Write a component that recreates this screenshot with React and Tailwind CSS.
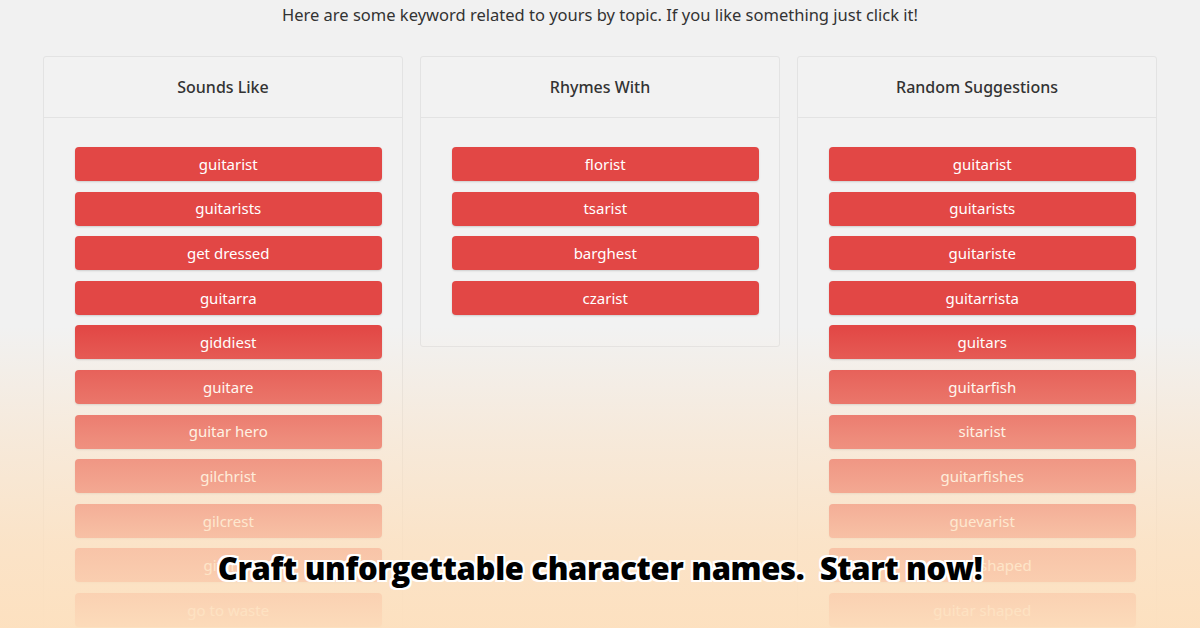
import React from "react";

const sounds = ["guitarist", "guitarists", "get dressed", "guitarra", "giddiest", "guitare", "guitar hero", "gilchrist", "gilcrest", "gitarist", "go to waste"];
const rhymes = ["florist", "tsarist", "barghest", "czarist"];
const random = ["guitarist", "guitarists", "guitariste", "guitarrista", "guitars", "guitarfish", "sitarist", "guitarfishes", "guevarist", "guitar-shaped", "guitar shaped"];

function Panel({ title, items }) {
  return (
    <div className="w-[360px] shrink-0 border border-[#e3e3e3] rounded-[3px] bg-[#f2f2f2]">
      <div className="h-[61px] flex items-center justify-center border-b border-[#e3e3e3] text-[16px] font-medium text-[#333]" style={{ fontFamily: '"Noto Sans", "Open Sans", sans-serif' }}>
        {title}
      </div>
      <div className="pt-[29px] pb-[31px] pl-[30.5px] pr-[20px] flex flex-col gap-[10.6px]">
        {items.map((t, i) => (
          <div
            key={i}
            className="h-[34px] rounded-[4px] bg-[#e24745] shadow-[0_1px_2px_rgba(0,0,0,0.15)] flex items-center justify-center text-white text-[15px]"
            style={{ fontFamily: '"Noto Sans", "Open Sans", sans-serif' }}
          >
            {t}
          </div>
        ))}
      </div>
    </div>
  );
}

export default function App() {
  return (
    <div className="relative w-[1200px] h-[628px] overflow-hidden bg-[#f1f1f1]">
      <p className="pt-[3px] text-center text-[16.5px] leading-[24px] text-[#333]" style={{ fontFamily: '"Noto Sans", "Open Sans", sans-serif' }}>
        Here are some keyword related to yours by topic. If you like something just click it!
      </p>
      <div className="mt-[29px] flex items-start gap-[17px] px-[43px]">
        <Panel title="Sounds Like" items={sounds} />
        <Panel title="Rhymes With" items={rhymes} />
        <Panel title="Random Suggestions" items={random} />
      </div>
      <div className="pointer-events-none absolute inset-0 bg-[linear-gradient(to_bottom,rgba(253,224,190,0)_0%,rgba(253,224,190,0)_52%,rgba(253,224,190,0.45)_70%,rgba(253,224,190,0.8)_86%,rgba(253,224,190,0.97)_100%)]" />
      <div className="absolute left-0 right-0 top-[545px] text-center">
        <span
          className="text-[31px] font-extrabold text-black tracking-[-0.35px] [text-shadow:0_0_2px_#fff,2px_0_0_#fff,-2px_0_0_#fff,0_2px_0_#fff,0_-2px_0_#fff,2px_2px_0_#fff,-2px_-2px_0_#fff,2px_-2px_0_#fff,-2px_2px_0_#fff]"
          style={{ fontFamily: '"Open Sans", "Noto Sans", sans-serif', whiteSpace: "pre" }}
        >
          {"Craft unforgettable character names.  Start now!"}
        </span>
      </div>
    </div>
  );
}
